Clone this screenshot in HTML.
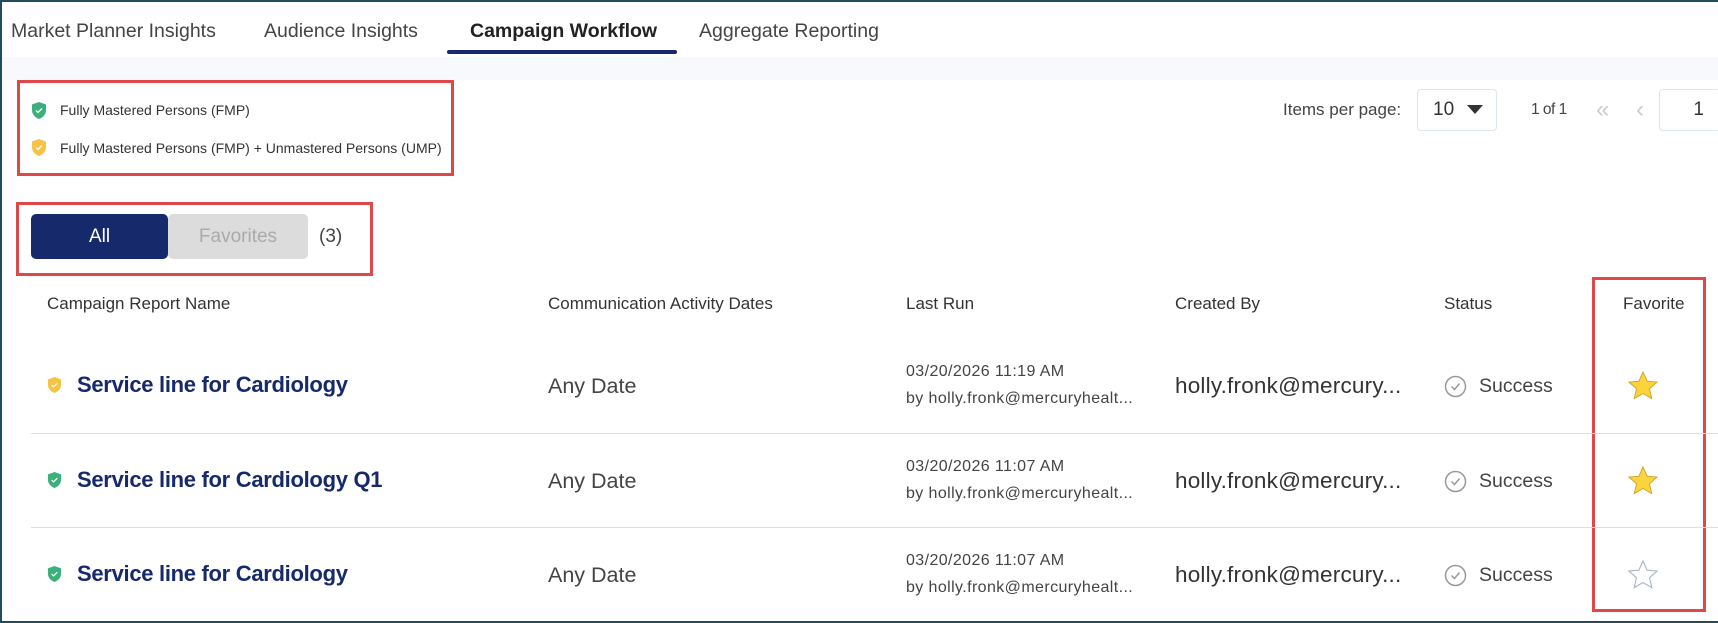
<!DOCTYPE html>
<html><head><meta charset="utf-8"><style>
*{margin:0;padding:0;box-sizing:border-box}
body{width:1718px;height:623px;background:#fff;font-family:"Liberation Sans",sans-serif;color:#333;position:relative;overflow:hidden}
.frame{position:absolute;left:0;top:0;width:1718px;height:623px;border:2px solid #1f4e5a;border-right:none;z-index:5;pointer-events:none}
.a{position:absolute;white-space:nowrap}
.tab{top:20px;font-size:19.5px;color:#444}
.band{position:absolute;left:0;top:57px;width:1718px;height:23px;background:#f7f9fc}
.red{position:absolute;border:3px solid #e04848}
.hdr{top:294px;font-size:17px;color:#333}
.name{font-size:22px;font-weight:bold;color:#16296b;letter-spacing:-0.3px}
.any{font-size:21.5px;color:#444}
.lr{font-size:16px;color:#444;line-height:27px;letter-spacing:0.4px}
.cb{font-size:22.5px;color:#333;letter-spacing:0.2px}
.succ{font-size:19.5px;color:#444}
.div{position:absolute;left:31px;width:1687px;height:1px;background:#ddd}
</style></head><body>
<div class="frame"></div>
<div class="a tab" style="left:11px">Market Planner Insights</div>
<div class="a tab" style="left:264px">Audience Insights</div>
<div class="a tab" style="left:470px;font-weight:bold;color:#222">Campaign Workflow</div>
<div class="a tab" style="left:699px">Aggregate Reporting</div>
<div class="a" style="left:447px;top:50px;width:230px;height:4px;background:#16296b;border-radius:2px"></div>
<div class="band"></div>

<div class="red" style="left:17px;top:80px;width:437px;height:96px"></div>
<svg class="a" style="left:31px;top:101px" width="16" height="19" viewBox="0 0 16 19"><path d="M8 1L15 3.5V9c0 4.5-3 7.5-7 9C4 16.5 1 13.5 1 9V3.5Z" fill="#3bb07a"/><path d="M5 9.5l2 2 4-4" stroke="#fff" stroke-width="1.3" fill="none"/></svg>
<div class="a" style="left:60px;top:102px;font-size:14px;color:#333">Fully Mastered Persons (FMP)</div>
<svg class="a" style="left:31px;top:138px" width="16" height="19" viewBox="0 0 16 19"><path d="M8 1L15 3.5V9c0 4.5-3 7.5-7 9C4 16.5 1 13.5 1 9V3.5Z" fill="#f8c244"/><path d="M5 9.5l2 2 4-4" stroke="#fff" stroke-width="1.3" fill="none"/></svg>
<div class="a" style="left:60px;top:140px;font-size:14px;color:#333">Fully Mastered Persons (FMP) + Unmastered Persons (UMP)</div>

<div class="red" style="left:16px;top:202px;width:357px;height:74px"></div>
<div class="a" style="left:31px;top:214px;width:137px;height:45px;background:#16296b;border-radius:5px;color:#fff;font-size:19px;text-align:center;line-height:45px">All</div>
<div class="a" style="left:168px;top:214px;width:140px;height:45px;background:#dcdcdc;border-radius:5px;color:#aaa;font-size:19px;text-align:center;line-height:45px">Favorites</div>
<div class="a" style="left:319px;top:226px;font-size:19px;color:#444">(3)</div>

<div class="a" style="left:1283px;top:100px;font-size:17px;color:#444">Items per page:</div>
<div class="a" style="left:1417px;top:89px;width:80px;height:42px;border:1px solid #dde6ee;border-radius:4px"></div>
<div class="a" style="left:1433px;top:99px;font-size:19px;color:#333">10</div>
<div class="a" style="left:1467px;top:105px;width:0;height:0;border-left:8px solid transparent;border-right:8px solid transparent;border-top:9px solid #333"></div>
<div class="a" style="left:1531px;top:101px;font-size:15.5px;color:#444;letter-spacing:-0.5px">1 of 1</div>
<div class="a" style="left:1596px;top:96px;font-size:24px;color:#ccc">«</div>
<div class="a" style="left:1636px;top:96px;font-size:24px;color:#ccc">‹</div>
<div class="a" style="left:1659px;top:89px;width:62px;height:42px;border:1px solid #dde6ee;border-radius:4px;font-size:19px;color:#333;text-align:right;padding-right:16px;line-height:40px">1</div>

<div class="a hdr" style="left:47px">Campaign Report Name</div>
<div class="a hdr" style="left:548px">Communication Activity Dates</div>
<div class="a hdr" style="left:906px">Last Run</div>
<div class="a hdr" style="left:1175px">Created By</div>
<div class="a hdr" style="left:1444px">Status</div>
<div class="a hdr" style="left:1623px">Favorite</div>
<div class="red" style="left:1592px;top:277px;width:114px;height:335px"></div>

<div class="div" style="top:433px"></div>
<div class="div" style="top:527px"></div>

<svg class="a" style="left:47px;top:376px" width="15" height="18" viewBox="0 0 16 19"><path d="M8 1L15 3.5V9c0 4.5-3 7.5-7 9C4 16.5 1 13.5 1 9V3.5Z" fill="#f8c244"/><path d="M5 9.5l2 2 4-4" stroke="#fff" stroke-width="1.3" fill="none"/></svg>
<div class="a name" style="left:77px;top:372px">Service line for Cardiology</div>
<div class="a any" style="left:548px;top:374px">Any Date</div>
<div class="a lr" style="left:906px;top:358px">03/20/2026 11:19 AM<br>by holly.fronk@mercuryhealt...</div>
<div class="a cb" style="left:1175px;top:373px">holly.fronk@mercury...</div>
<svg class="a" style="left:1444px;top:375px" width="23" height="23"><circle cx="11.5" cy="11.5" r="10" fill="none" stroke="#999" stroke-width="1.5"/><path d="M7.5 11.5l3 3 5-6" fill="none" stroke="#999" stroke-width="1.5"/></svg>
<div class="a succ" style="left:1479px;top:375px">Success</div>
<svg class="a" style="left:1626px;top:369px" width="34" height="34" viewBox="0 0 24 24"><path d="M12 2l2.9 6.6 7.1.6-5.4 4.7 1.6 7L12 17.3 5.8 20.9l1.6-7L2 9.2l7.1-.6z" fill="#fcd33d" stroke="#c9a020" stroke-width=".6"/></svg>

<svg class="a" style="left:47px;top:471px" width="15" height="18" viewBox="0 0 16 19"><path d="M8 1L15 3.5V9c0 4.5-3 7.5-7 9C4 16.5 1 13.5 1 9V3.5Z" fill="#3bb07a"/><path d="M5 9.5l2 2 4-4" stroke="#fff" stroke-width="1.3" fill="none"/></svg>
<div class="a name" style="left:77px;top:467px">Service line for Cardiology Q1</div>
<div class="a any" style="left:548px;top:469px">Any Date</div>
<div class="a lr" style="left:906px;top:453px">03/20/2026 11:07 AM<br>by holly.fronk@mercuryhealt...</div>
<div class="a cb" style="left:1175px;top:468px">holly.fronk@mercury...</div>
<svg class="a" style="left:1444px;top:470px" width="23" height="23"><circle cx="11.5" cy="11.5" r="10" fill="none" stroke="#999" stroke-width="1.5"/><path d="M7.5 11.5l3 3 5-6" fill="none" stroke="#999" stroke-width="1.5"/></svg>
<div class="a succ" style="left:1479px;top:470px">Success</div>
<svg class="a" style="left:1626px;top:464px" width="34" height="34" viewBox="0 0 24 24"><path d="M12 2l2.9 6.6 7.1.6-5.4 4.7 1.6 7L12 17.3 5.8 20.9l1.6-7L2 9.2l7.1-.6z" fill="#fcd33d" stroke="#c9a020" stroke-width=".6"/></svg>

<svg class="a" style="left:47px;top:565px" width="15" height="18" viewBox="0 0 16 19"><path d="M8 1L15 3.5V9c0 4.5-3 7.5-7 9C4 16.5 1 13.5 1 9V3.5Z" fill="#3bb07a"/><path d="M5 9.5l2 2 4-4" stroke="#fff" stroke-width="1.3" fill="none"/></svg>
<div class="a name" style="left:77px;top:561px">Service line for Cardiology</div>
<div class="a any" style="left:548px;top:563px">Any Date</div>
<div class="a lr" style="left:906px;top:547px">03/20/2026 11:07 AM<br>by holly.fronk@mercuryhealt...</div>
<div class="a cb" style="left:1175px;top:562px">holly.fronk@mercury...</div>
<svg class="a" style="left:1444px;top:564px" width="23" height="23"><circle cx="11.5" cy="11.5" r="10" fill="none" stroke="#999" stroke-width="1.5"/><path d="M7.5 11.5l3 3 5-6" fill="none" stroke="#999" stroke-width="1.5"/></svg>
<div class="a succ" style="left:1479px;top:564px">Success</div>
<svg class="a" style="left:1626px;top:558px" width="34" height="34" viewBox="0 0 24 24"><path d="M12 2l2.9 6.6 7.1.6-5.4 4.7 1.6 7L12 17.3 5.8 20.9l1.6-7L2 9.2l7.1-.6z" fill="#fff" stroke="#aab4c4" stroke-width=".8"/></svg>
</body></html>
